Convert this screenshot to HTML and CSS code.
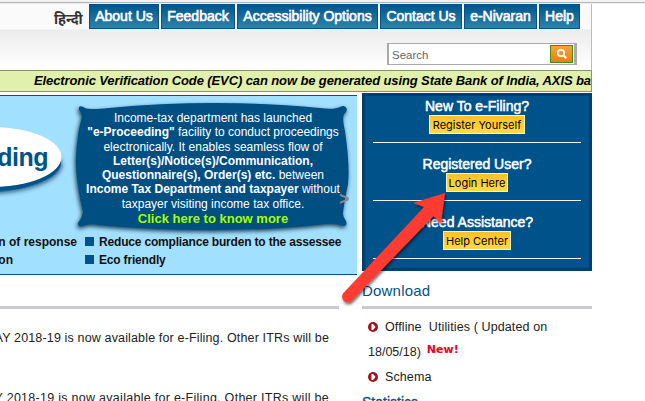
FILE: index.html
```html
<!DOCTYPE html>
<html lang="en">
<head>
<meta charset="utf-8">
<title>e-Filing</title>
<link rel="stylesheet" href="styles.css">
</head>
<body>
<div class="topline"></div>
<div class="site">
  <header class="header">
    <nav class="nav">
      <a class="hindi" lang="hi">हिन्दी</a>
      <a class="tab about">About Us</a>
      <a class="tab feedback">Feedback</a>
      <a class="tab access">Accessibility Options</a>
      <a class="tab contact">Contact Us</a>
      <a class="tab nivaran">e-Nivaran</a>
      <a class="tab help">Help</a>
    </nav>
    <div class="search"><span>Search</span>
      <button class="go" aria-label="Search"><svg width="14" height="14" viewBox="0 0 14 14"><circle cx="6" cy="6" r="3.2" fill="none" stroke="#fff" stroke-width="1.7"/><path d="M8.5 8.5 11.3 11.3" stroke="#fff" stroke-width="2"/></svg></button>
    </div>
  </header>
  <div class="ticker"><span>Electronic Verification Code (EVC) can now be generated using State Bank of India, AXIS bank</span></div>
  <div class="columns">
    <main class="main">
      <section class="banner">
        <svg class="art" width="357" height="178" viewBox="0 96 357 178">
          <defs>
            <filter id="soft" x="-10%" y="-10%" width="125%" height="130%"><feDropShadow dx="-1" dy="2" stdDeviation="2" flood-color="#001c30" flood-opacity=".85"/></filter>
            <filter id="glow" x="-10%" y="-10%" width="125%" height="130%"><feDropShadow dx="1" dy="2" stdDeviation="2" flood-color="#002c4c" flood-opacity=".65"/></filter>
          </defs>
          <ellipse cx="-9" cy="165" rx="70" ry="27" fill="#00528a" filter="url(#glow)" transform="rotate(-2 -9 165)"/>
          <ellipse cx="-9" cy="157" rx="70.500" ry="30" fill="#fff"/>
          <path filter="url(#soft)" fill="#004f82" d="M79 107Q81 105 85 108Q90 110 109 108Q160 103 214 103Q275 103 320 108Q334 110 340 107Q345 104 347 109Q347 112 344 114Q342 118 345 131Q350 165 348 184Q343 209 343 214Q343 217 346 221Q348 226 343 226Q337 223 326 224Q273 230 214 230Q150 230 99 225Q90 223 83 226Q78 228 78 223Q82 218 83 212Q75 178 76 157Q77 133 82 117Q82 113 79 110Z"/>
        </svg>
        <div class="oval-text">e-Proceeding</div>
        <div class="pitch">
          <p>Income-tax department has launched</p>
          <p><b>"e-Proceeding"</b> facility to conduct proceedings</p>
          <p>electronically. It enables seamless flow of</p>
          <p><b>Letter(s)/Notice(s)/Communication,</b></p>
          <p><b>Questionnaire(s), Order(s) etc.</b> between</p>
          <p><b>Income Tax Department and taxpayer</b> without</p>
          <p>taxpayer visiting income tax office.</p>
          <p class="cta">Click here to know more</p>
        </div>
        <span class="next">&gt;</span>
        <div class="benefits">
          <span class="left">Submission of response</span><span class="item">Reduce compliance burden to the assessee</span>
          <span class="left o">Authentication</span><span class="item">Eco friendly</span>
        </div>
      </section>
      <section class="news">
        <p class="n1">ITR for AY 2018-19 is now available for e-Filing. Other ITRs will be</p>
        <p class="n2">ITR for AY 2018-19 is now available for e-Filing. Other ITRs will be</p>
      </section>
    </main>
    <aside class="side">
      <section class="login">
        <div class="block"><h2>New To e-Filing?</h2><a class="register">Register Yourself</a></div>
        <div class="block"><h2>Registered User?</h2><a class="signin">Login Here</a></div>
        <div class="block"><h2>Need Assistance?</h2><a class="center">Help Center</a></div>
      </section>
      <h3 class="download">Download</h3>
      <ul class="links">
        <li><svg class="bullet" viewBox="0 0 10 10"><circle cx="5" cy="5" r="5" fill="#a5141c"/><path d="M3.500 2H5L7.500 5 5 8H3.500Z" fill="#fff"/></svg><span class="off">Offline &nbsp;Utilities ( Updated on</span></li>
        <li><span>18/05/18)</span><strong>New!</strong></li>
        <li><svg class="bullet" viewBox="0 0 10 10"><circle cx="5" cy="5" r="5" fill="#a5141c"/><path d="M3.500 2H5L7.500 5 5 8H3.500Z" fill="#fff"/></svg><span class="schema">Schema</span></li>
      </ul>
      <h3 class="stats">Statistics</h3>
    </aside>
  </div>
</div>
<svg class="arrow" width="645" height="401" viewBox="0 0 645 401">
  <defs><filter id="drop" x="-10%" y="-10%" width="125%" height="125%"><feDropShadow dx="1" dy="2" stdDeviation="1.500" flood-color="#000" flood-opacity=".6"/></filter></defs>
  <path filter="url(#drop)" fill="#ff3b30" d="M445 193 413 203 424 207 343 293.500Q341 297 343.500 300.500Q347 304 351.500 301L433.500 216 441 223Z"/>
</svg>
</body>
</html>
```
FILE: styles.css
```css
* { box-sizing: border-box; }
body { margin: 0; width: 645px; height: 401px; overflow: hidden; background: #fff; font-family: "Liberation Sans", sans-serif; color: #222; }
p, h2, h3, ul { margin: 0; padding: 0; font-weight: normal; }
.topline { height: 4px; background: linear-gradient(#f2f2f2 0 2px, #b4b4b4 2px 3px, #eee 3px); }
.site { width: 592px; }
.header { height: 66px; border-right: 1px solid #bbb; background: linear-gradient(#fafafa 0 25px, #ececec 26px, #fff 64px); }
.nav { display: flex; gap: 2px; height: 25px; padding-left: 54px; }
.hindi { width: 33px; font: bold 14px/29px "Noto Sans", "Noto Sans Devanagari", sans-serif; white-space: nowrap; color: #333; }
.tab { height: 25px; border: 1px solid #00528a; background: linear-gradient(#00568c, #2f82ab); color: #fff; font-size: 14px; line-height: 23px; text-align: center; white-space: nowrap; -webkit-text-stroke: .6px #fff; }
.about { width: 70px; } .feedback { width: 74px; } .access { width: 141px; } .contact { width: 82px; } .nivaran { width: 73px; } .help { width: 41px; }
.search { display: flex; justify-content: space-between; align-items: center; width: 190px; height: 22px; margin: 14px 0 0 387px; padding: 0 1px 0 3px; border: 1px solid #aaa; border-width: 1px 3px 1px 2px; background: #fff; color: #666; font-size: 11.500px; }
.search span { padding-top: 2px; }
.go { display: flex; align-items: center; justify-content: center; width: 23px; height: 18px; padding: 0; border: 1px solid #4b8a0c; background: linear-gradient(#f9a33a, #ee7d17); }
.ticker { height: 22px; overflow: hidden; padding-left: 34px; border: 1px solid #839760; border-left: 0; background: #e1f0ad; color: #000; font: italic bold 13px/20px "Liberation Sans", sans-serif; letter-spacing: -.11px; white-space: nowrap; }
.columns { display: flex; }
.main { width: 357px; padding-top: 3px; }
.banner { position: relative; width: 357px; height: 180px; overflow: hidden; border: solid #00528a; border-width: 1px 0; background: #a2e0ff; }
.art { display: block; }
.oval-text { position: absolute; right: 309px; top: 46px; color: #00528a; font: bold 25px/30px "Liberation Sans", sans-serif; letter-spacing: -.5px; white-space: nowrap; }
.pitch { position: absolute; left: 74px; top: 15px; width: 278px; color: #fff; font-size: 12px; text-align: center; white-space: nowrap; }
.pitch p { height: 14.300px; line-height: 14.300px; }
.pitch .cta { margin-top: 1px; color: #a4ff00; font-weight: bold; font-size: 13px; }
.next { position: absolute; left: 339px; top: 92px; color: #888; font: bold 18px/22px "Liberation Sans", sans-serif; }
.benefits { position: absolute; left: 0; top: 137px; width: 357px; display: grid; grid-template-columns: 77px 270px; column-gap: 8px; color: #111; font: bold 12px/18px "Liberation Sans", sans-serif; letter-spacing: -.18px; white-space: nowrap; }
.left { display: flex; justify-content: flex-end; letter-spacing: 0; }
.o { padding-right: 64px; }
.item::before { content: ""; display: inline-block; width: 9px; height: 9px; margin-right: 5px; background: #00528a; }
.news { width: 339px; height: 95px; margin-top: 31px; border-top: 3px solid #cbc9d8; font-size: 12.500px; letter-spacing: .15px; }
.news p { display: flex; justify-content: flex-end; padding-right: 10px; white-space: nowrap; line-height: 16px; }
.n1 { padding-top: 21px; } .n2 { padding-top: 44px; letter-spacing: .28px; }
.side { width: 230px; margin-left: 5px; padding-top: 1px; }
.login { height: 178px; padding: 4px 8px 0; border: 3px solid #003e6c; background: #00528a; }
.block { display: flex; flex-direction: column; align-items: center; height: 58px; border-bottom: 1px solid #eef4f8; }
.block:first-child { height: 43px; }
.block:not(:first-child) { padding-top: 15px; }
.block h2 { color: #fff; font-size: 14px; line-height: 12px; height: 15px; -webkit-text-stroke: .5px #fff; white-space: nowrap; }
.block a { flex: none; height: 19px; border: 1px solid #fff3bd; background: linear-gradient(#ffc126, #ffdb47); color: #000; font: 11px/18px "Inter", sans-serif; text-align: center; white-space: nowrap; }
.register { width: 96px; } .signin { width: 62px; } .center { width: 68px; }
.download { height: 38px; border-bottom: 3px solid #cbc9d8; color: #00528a; font-size: 15px; letter-spacing: .2px; line-height: 39px; }
.links { list-style: none; height: 85px; padding: 5px 0 0 6px; }
.links li { display: flex; align-items: center; height: 25px; font-size: 12.500px; white-space: nowrap; }
.off { letter-spacing: .11px; }
.schema { letter-spacing: .1px; }
.bullet { width: 10px; height: 10px; margin-right: 7px; }
.links strong { margin: -4px 0 0 6px; color: #f00019; font: bold 11px/16px "DejaVu Sans", sans-serif; }
.stats { color: #00528a; font-size: 14px; -webkit-text-stroke: .3px #00528a; }
.arrow { position: absolute; left: 0; top: 0; pointer-events: none; }
```
